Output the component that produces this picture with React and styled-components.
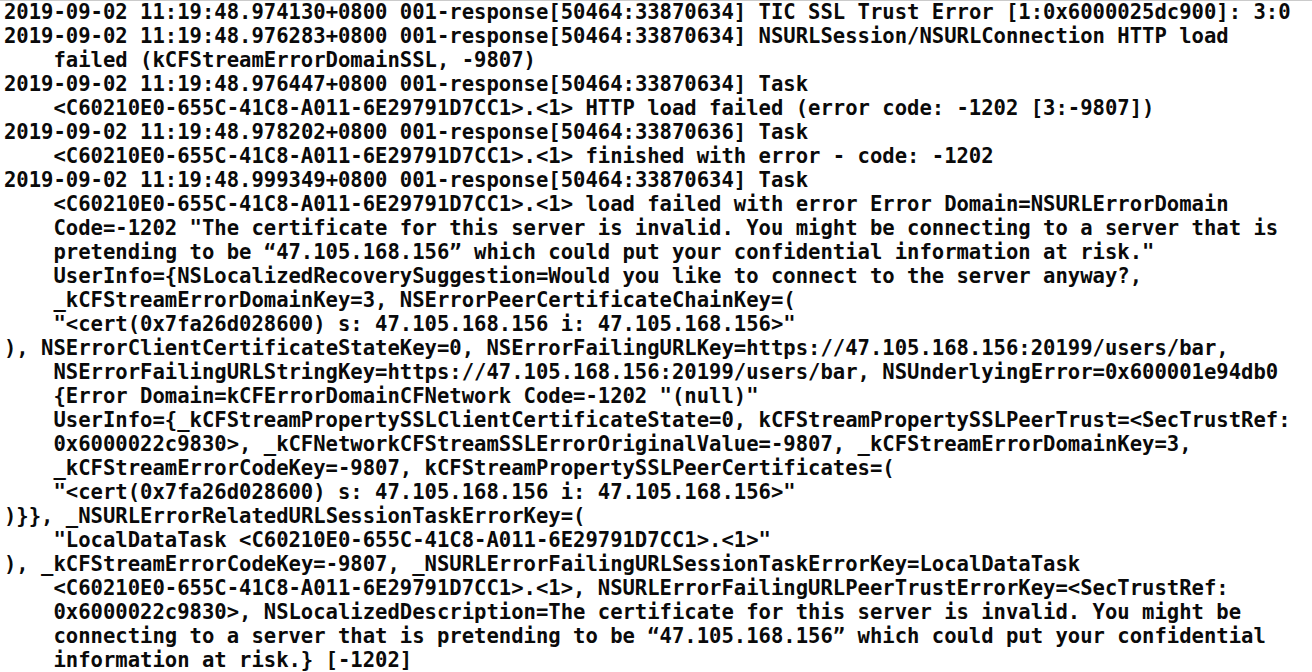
import React from "react";
import styled, { createGlobalStyle } from "styled-components";

const GlobalStyle = createGlobalStyle`
  html, body {
    margin: 0;
    padding: 0;
    background: #ffffff;
    overflow: hidden;
  }
`;

const Window = styled.div`
  width: 1312px;
  height: 672px;
  box-sizing: border-box;
  border-top: 1px solid #cbcbcb;
  background: #ffffff;
  overflow: hidden;
`;

const LogView = styled.div`
  display: flex;
  flex-direction: column;
  margin-top: -1px;
  padding-left: 4px;
  font-family: "DejaVu Sans Mono", "Liberation Mono", monospace;
  font-weight: bold;
  font-size: 20.55px;
  line-height: 24px;
  color: #0a0a0a;
`;

const Line = styled.div`
  white-space: pre;
  padding-left: ${(p) => (p.$indent ? "4ch" : "0")};
`;

const lines = [
  [0, "2019-09-02 11:19:48.974130+0800 001-response[50464:33870634] TIC SSL Trust Error [1:0x6000025dc900]: 3:0"],
  [0, "2019-09-02 11:19:48.976283+0800 001-response[50464:33870634] NSURLSession/NSURLConnection HTTP load"],
  [1, "failed (kCFStreamErrorDomainSSL, -9807)"],
  [0, "2019-09-02 11:19:48.976447+0800 001-response[50464:33870634] Task"],
  [1, "<C60210E0-655C-41C8-A011-6E29791D7CC1>.<1> HTTP load failed (error code: -1202 [3:-9807])"],
  [0, "2019-09-02 11:19:48.978202+0800 001-response[50464:33870636] Task"],
  [1, "<C60210E0-655C-41C8-A011-6E29791D7CC1>.<1> finished with error - code: -1202"],
  [0, "2019-09-02 11:19:48.999349+0800 001-response[50464:33870634] Task"],
  [1, "<C60210E0-655C-41C8-A011-6E29791D7CC1>.<1> load failed with error Error Domain=NSURLErrorDomain"],
  [1, "Code=-1202 \"The certificate for this server is invalid. You might be connecting to a server that is"],
  [1, "pretending to be \u201c47.105.168.156\u201d which could put your confidential information at risk.\""],
  [1, "UserInfo={NSLocalizedRecoverySuggestion=Would you like to connect to the server anyway?,"],
  [1, "_kCFStreamErrorDomainKey=3, NSErrorPeerCertificateChainKey=("],
  [1, "\"<cert(0x7fa26d028600) s: 47.105.168.156 i: 47.105.168.156>\""],
  [0, "), NSErrorClientCertificateStateKey=0, NSErrorFailingURLKey=https://47.105.168.156:20199/users/bar,"],
  [1, "NSErrorFailingURLStringKey=https://47.105.168.156:20199/users/bar, NSUnderlyingError=0x600001e94db0"],
  [1, "{Error Domain=kCFErrorDomainCFNetwork Code=-1202 \"(null)\""],
  [1, "UserInfo={_kCFStreamPropertySSLClientCertificateState=0, kCFStreamPropertySSLPeerTrust=<SecTrustRef:"],
  [1, "0x6000022c9830>, _kCFNetworkCFStreamSSLErrorOriginalValue=-9807, _kCFStreamErrorDomainKey=3,"],
  [1, "_kCFStreamErrorCodeKey=-9807, kCFStreamPropertySSLPeerCertificates=("],
  [1, "\"<cert(0x7fa26d028600) s: 47.105.168.156 i: 47.105.168.156>\""],
  [0, ")}}, _NSURLErrorRelatedURLSessionTaskErrorKey=("],
  [1, "\"LocalDataTask <C60210E0-655C-41C8-A011-6E29791D7CC1>.<1>\""],
  [0, "), _kCFStreamErrorCodeKey=-9807, _NSURLErrorFailingURLSessionTaskErrorKey=LocalDataTask"],
  [1, "<C60210E0-655C-41C8-A011-6E29791D7CC1>.<1>, NSURLErrorFailingURLPeerTrustErrorKey=<SecTrustRef:"],
  [1, "0x6000022c9830>, NSLocalizedDescription=The certificate for this server is invalid. You might be"],
  [1, "connecting to a server that is pretending to be \u201c47.105.168.156\u201d which could put your confidential"],
  [1, "information at risk.} [-1202]"],
];

export default function App() {
  return (
    <>
      <GlobalStyle />
      <Window>
        <LogView>
          {lines.map(([indent, text], i) => (
            <Line key={i} $indent={indent === 1}>
              {text}
            </Line>
          ))}
        </LogView>
      </Window>
    </>
  );
}
